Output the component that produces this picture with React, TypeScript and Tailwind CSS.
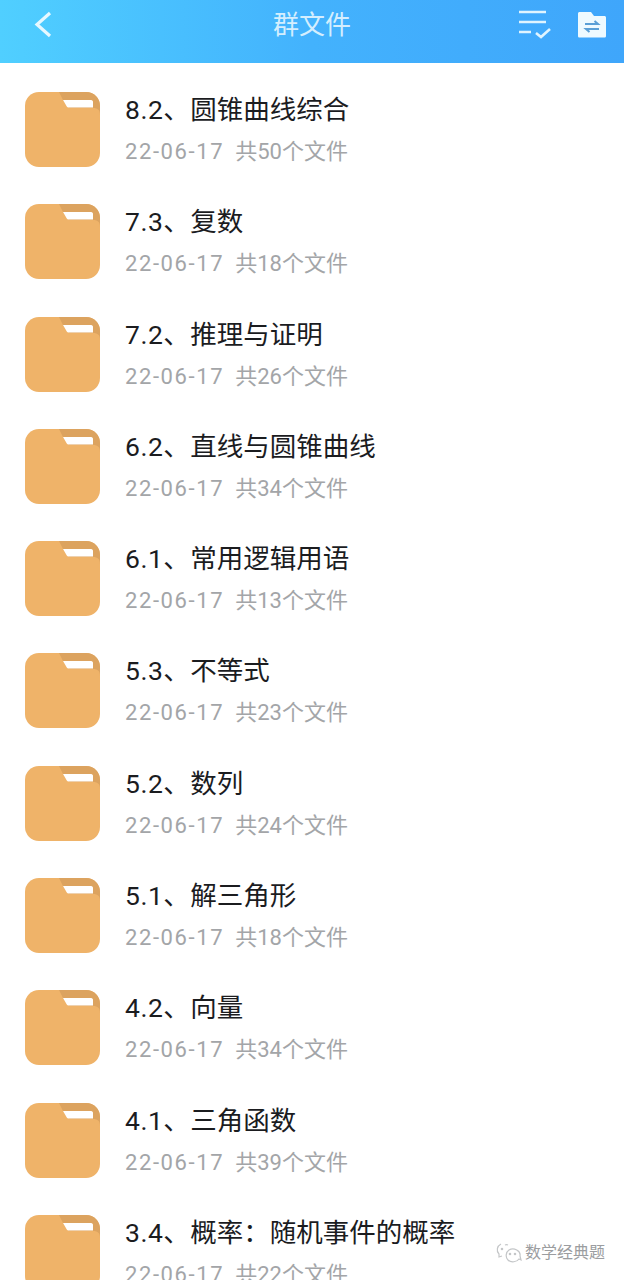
const files = [
  { no: '8.2', name: '圆锥曲线综合', count: 50 },
  { no: '7.3', name: '复数', count: 18 },
  { no: '7.2', name: '推理与证明', count: 26 },
  { no: '6.2', name: '直线与圆锥曲线', count: 34 },
  { no: '6.1', name: '常用逻辑用语', count: 13 },
  { no: '5.3', name: '不等式', count: 23 },
  { no: '5.2', name: '数列', count: 24 },
  { no: '5.1', name: '解三角形', count: 18 },
  { no: '4.2', name: '向量', count: 34 },
  { no: '4.1', name: '三角函数', count: 39 },
  { no: '3.4', name: '概率：随机事件的概率', count: 22 },
];

const font = "font-['Roboto','Noto_Sans_CJK_SC',sans-serif]";

function FolderIcon() {
  return (
    <svg width="75" height="75" viewBox="0 0 75 75" className="shrink-0">
      <rect width="75" height="75" rx="14" fill="#efb369" />
      <path d="M34 0H61C69 0 75 6 75 14V23C75 18 73 16 68 16H44L38 8Z" fill="#dca35f" />
      <path d="M38 8H66C67.500 8 68 9 68 10V15.500H44C43 15.500 42 15 41.500 14Z" fill="#ffffff" />
    </svg>
  );
}

function Row({ no, name, count }: { no: string; name: string; count: number }) {
  return (
    <div className="flex h-[112.3px] shrink-0 items-start gap-[25px] pl-[25px]">
      <FolderIcon />
      <div className="min-w-0">
        <div className="h-[36px] pt-[1px] text-[26.5px] leading-[34px] whitespace-nowrap text-[#1b1c1f]">
          <span className="tracking-[0.5px]">{no}、</span>
          {name}
        </div>
        <div className="mt-[9px] text-[22px] leading-[30px] whitespace-nowrap text-[#a3a5a8]">
          <span className="tracking-[1.6px]">22-06-17</span>
          <span className="ml-[11px]">共{count}个文件</span>
        </div>
      </div>
    </div>
  );
}

export default function App() {
  return (
    <div className={`relative flex h-[1280px] w-[624px] flex-col overflow-hidden bg-white ${font}`}>
      <header className="relative flex h-[63px] shrink-0 items-center justify-between bg-gradient-to-r from-[#50cfff] via-[#43b2fd] to-[#3fa6fb] pr-[18px] pb-[13px] pl-[34px]">
        <svg width="18" height="28" viewBox="0 0 18 28" fill="none" stroke="#e6f8ff" strokeWidth="3.200">
          <path d="M16 2L3 13.500L16 25" />
        </svg>
        <div className="absolute top-[7px] left-0 w-full text-center text-[26px] leading-[36px] text-[#d4eefe]">群文件</div>
        <div className="flex items-center gap-[27px]">
          <svg width="32" height="30" viewBox="0 0 32 30" fill="none" stroke="#dff4ff" strokeWidth="2.600">
            <path d="M0 2H27M0 12H27M0 22H12M17 23L22 27L31 19" />
          </svg>
          <svg width="28" height="26" viewBox="0 0 28 26">
            <path d="M0 1.500C0 .7 .7 0 1.500 0H13L16 4H26.500C27.300 4 28 4.700 28 5.500V24C28 25 27.300 25.500 26.500 25.500H1.500C.7 25.500 0 25 0 24Z" fill="#eefaff" />
            <path d="M7 12H20L16.500 9M21 17H8L11.500 20" fill="none" stroke="#5a9fd6" strokeWidth="2" />
          </svg>
        </div>
      </header>
      <main className="flex flex-col pt-[29px]">
        {files.map((file) => (
          <Row key={file.no} no={file.no} name={file.name} count={file.count} />
        ))}
      </main>
      <div className="absolute right-[19px] bottom-[17px] flex items-center gap-[3px] text-[16px] leading-[20px]">
        <svg width="26" height="20" viewBox="0 0 26 20" fill="none" stroke="#c4c6c8" strokeWidth="1.200">
          <path d="M5 1C1 3 0 8 3 11L3 14L6 13M9 2C10 1.500 11 1.500 12 2" />
          <path d="M13 7C10 9 9 14 12 17C15 20 21 19 23 16L25 17L24 13C25 8 18 4 13 7Z" />
          <circle cx="14" cy="11" r=".7" />
          <circle cx="19" cy="11" r=".7" />
          <circle cx="6" cy="6" r=".7" />
        </svg>
        <span className="text-[#9b9da0]">数学经典题</span>
      </div>
    </div>
  );
}
